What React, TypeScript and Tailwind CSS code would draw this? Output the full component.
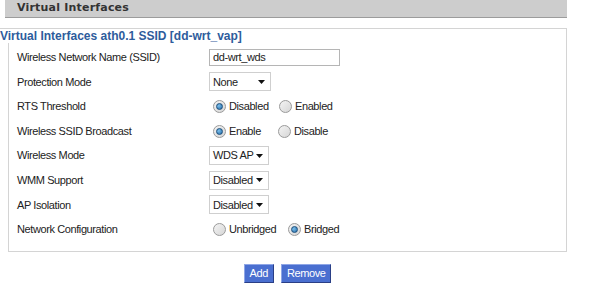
import React from 'react';

const font = "font-['Tahoma','Liberation_Sans','DejaVu_Sans',sans-serif]";

function Radio({ checked }: { checked?: boolean }) {
  return (
    <span className="inline-flex h-[13px] w-[13px] items-center justify-center rounded-full border border-[#9a9a9a] bg-gradient-to-br from-[#f4f4f4] to-[#d6d6d6]">
      {checked && (
        <span className="h-[7px] w-[7px] rounded-full border border-[#1d4f7c] bg-[radial-gradient(circle_at_35%_35%,#7fc0ec,#1f6aa6)]" />
      )}
    </span>
  );
}

function RadioGroup({ options, checked, firstWidth }: { options: string[]; checked: number; firstWidth: string }) {
  return (
    <div className="flex items-center pl-[4px]">
      <span className={`flex items-center gap-[3px] ${firstWidth}`}>
        <Radio checked={checked === 0} />
        <span>{options[0]}</span>
      </span>
      <span className="flex items-center gap-[3px]">
        <Radio checked={checked === 1} />
        <span>{options[1]}</span>
      </span>
    </div>
  );
}

function Select({ value, width }: { value: string; width: string }) {
  return (
    <div className={`flex h-[19px] items-center justify-between border border-[#cfcfcf] bg-white pl-[3px] pr-[5px] ${width}`}>
      <span>{value}</span>
      <svg width="7" height="4" viewBox="0 0 7 4">
        <path d="M0 0h7L3.5 4z" fill="#111" />
      </svg>
    </div>
  );
}

const rows: { label: string; control: React.ReactNode }[] = [
  {
    label: 'Wireless Network Name (SSID)',
    control: (
      <div className="flex h-[17px] w-[131px] items-center border border-[#b5b5b5] bg-white px-[3px]">dd-wrt_wds</div>
    ),
  },
  { label: 'Protection Mode', control: <Select value="None" width="w-[62px]" /> },
  { label: 'RTS Threshold', control: <RadioGroup options={['Disabled', 'Enabled']} checked={0} firstWidth="w-[66px]" /> },
  { label: 'Wireless SSID Broadcast', control: <RadioGroup options={['Enable', 'Disable']} checked={0} firstWidth="w-[65px]" /> },
  { label: 'Wireless Mode', control: <Select value="WDS AP" width="w-[60px]" /> },
  { label: 'WMM Support', control: <Select value="Disabled" width="w-[60px]" /> },
  { label: 'AP Isolation', control: <Select value="Disabled" width="w-[60px]" /> },
  { label: 'Network Configuration', control: <RadioGroup options={['Unbridged', 'Bridged']} checked={1} firstWidth="w-[75px]" /> },
];

export default function App() {
  return (
    <div className={`h-[288px] w-[600px] overflow-hidden bg-white text-[11px] tracking-[-0.4px] text-[#222] ${font}`}>
      {/* Section header */}
      <div className="ml-[5px] flex h-[18px] w-[562px] items-center border-b border-[#9c9c9c] bg-[#cdcdcd] pl-[12px] font-['DejaVu_Sans',sans-serif] text-[11px] font-bold tracking-[0.2px] text-[#333]">
        Virtual Interfaces
      </div>

      {/* Fieldset */}
      <div className="relative mt-[10px]">
        <div className="absolute left-0 top-0 h-px w-[8px] bg-[#d4d4d4]" />
        <div className="ml-[8px] h-[224px] w-[559px] border border-[#d4d4d4] pt-[16px]">
          <div className="absolute left-0 top-[1px] bg-white pr-1 text-[12px] font-bold leading-[14px] tracking-[0px] text-[#2e5c9c]">
            Virtual Interfaces ath0.1 SSID [dd-wrt_vap]
          </div>
          <div className="flex flex-col">
            {rows.map((row) => (
              <div key={row.label} className="flex h-[24.6px] items-center pl-[8px]">
                <div className="w-[192px]">{row.label}</div>
                {row.control}
              </div>
            ))}
          </div>
        </div>
      </div>

      {/* Buttons */}
      <div className="ml-[8px] mt-[12px] flex w-[559px] justify-center gap-[7px]">
        <button className="h-[19px] border border-t-[#8fa6e6] border-l-[#8fa6e6] border-r-[#2a3f86] border-b-[#2a3f86] bg-[#4a6fd0] px-[5px] text-[11px] leading-none text-white">
          Add
        </button>
        <button className="h-[19px] border border-t-[#8fa6e6] border-l-[#8fa6e6] border-r-[#2a3f86] border-b-[#2a3f86] bg-[#4a6fd0] px-[5px] text-[11px] leading-none text-white">
          Remove
        </button>
      </div>
    </div>
  );
}
